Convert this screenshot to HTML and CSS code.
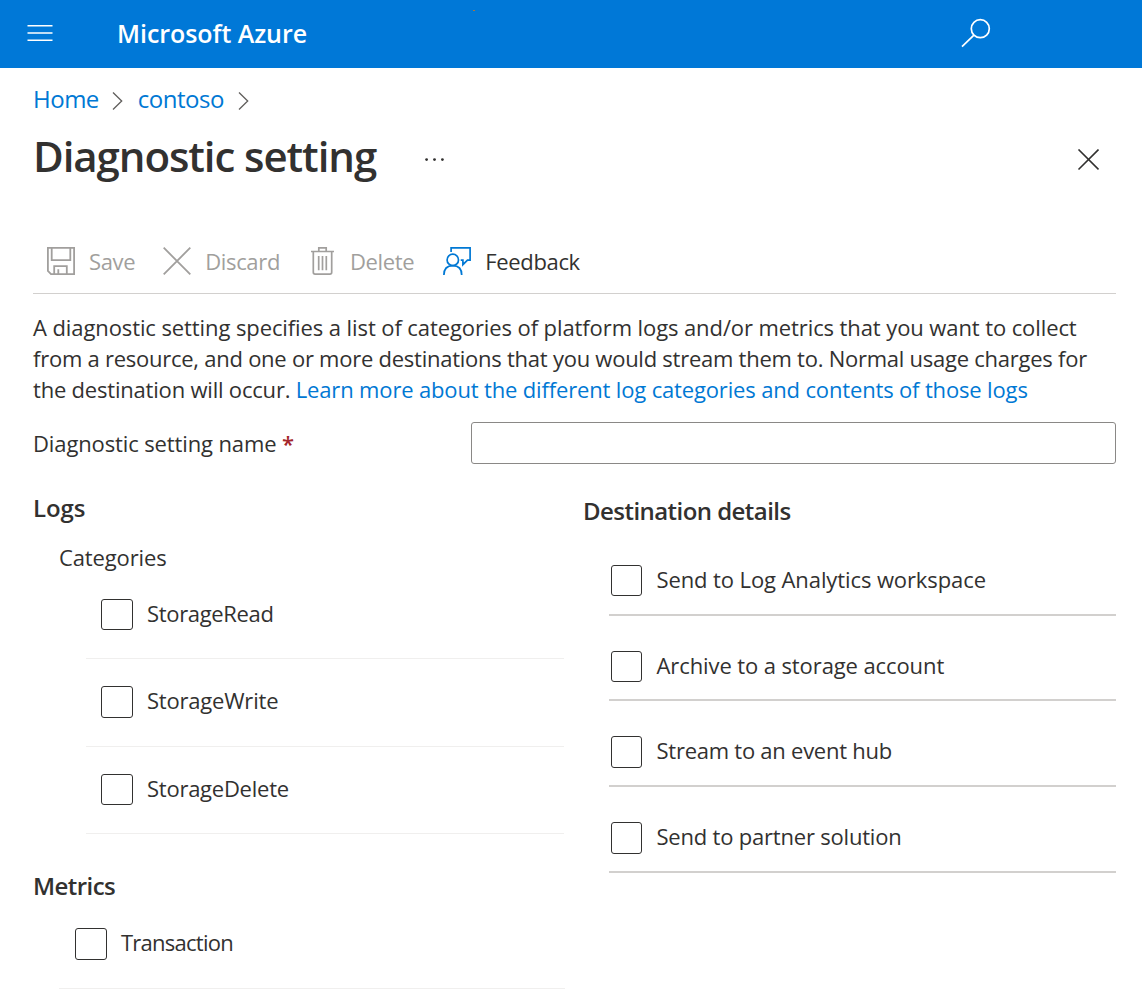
FILE: index.html
```html
<!DOCTYPE html>
<html lang="en">
<head>
<meta charset="utf-8">
<title>Diagnostic setting - Microsoft Azure</title>
<link rel="stylesheet" href="styles.css">
</head>
<body>
<header class="topbar">
  <svg class="menu-icon" width="26" height="18" viewBox="0 0 26 18" fill="none" stroke="#fff" stroke-width="1.5"><path d="M.5 1.8h25M.5 9h25M.5 16.2h25"/></svg>
  <span class="brand">Microsoft Azure</span>
  <span class="marker"></span>
  <svg class="search-icon" width="30" height="30" viewBox="0 0 30 30" fill="none" stroke="#fff" stroke-width="1.7"><circle cx="19.3" cy="10.7" r="9"/><path d="M12.9 17.1L1 28.6"/></svg>
</header>
<main class="page">
  <nav class="crumbs">
    <a class="home">Home</a>
    <svg width="12" height="20" viewBox="0 0 12 20" fill="none" stroke="#605e5c" stroke-width="1.3"><path d="M1 1.5L9.700 10 1 18.500"/></svg>
    <a class="resource">contoso</a>
    <svg width="12" height="20" viewBox="0 0 12 20" fill="none" stroke="#605e5c" stroke-width="1.3"><path d="M1 1.5L9.700 10 1 18.500"/></svg>
  </nav>
  <div class="title-row">
    <h1>Diagnostic setting</h1>
    <svg class="more" width="20" height="4" viewBox="0 0 20 4" fill="#323130"><circle cx="1.600" cy="1.600" r="1.400"/><circle cx="9.500" cy="1.600" r="1.400"/><circle cx="17.400" cy="1.600" r="1.400"/></svg>
    <svg class="close" width="22" height="22" viewBox="0 0 22 22" fill="none" stroke="#323130" stroke-width="1.600"><path d="M1.500.500l20 20M21.500.500l-20 20"/></svg>
  </div>
  <div class="toolbar">
    <button class="tool save" disabled>
      <svg width="28" height="28" viewBox="0 0 28 28" fill="none" stroke="#a19f9d" stroke-width="1.800"><path d="M.900.900h26.200v26.200H4L.900 24z"/><path d="M4.700.900v12.200h18.600V.900M7.200 27v-7.800h12.600V27M11.300 27v-4.800"/></svg>
      <span>Save</span>
    </button>
    <button class="tool discard" disabled>
      <svg width="28" height="28" viewBox="0 0 28 28" fill="none" stroke="#a19f9d" stroke-width="1.800"><path d="M.7.700l26.600 26.600M27.300.700L.700 27.300"/></svg>
      <span>Discard</span>
    </button>
    <button class="tool delete" disabled>
      <svg width="24" height="28" viewBox="0 0 24 28" fill="none" stroke="#a19f9d" stroke-width="1.700"><path d="M0 4.500h23M7.800 4.500V.900h7.400v3.600M2.300 4.500v20.800q0 1.800 1.800 1.800h14.800q1.800 0 1.800-1.800V4.500M7.700 9v14.200M11.500 9v14.200M15.300 9v14.200"/></svg>
      <span>Delete</span>
    </button>
    <button class="tool feedback">
      <svg width="28" height="28" viewBox="0 0 28 28" fill="none" stroke="#0078d4" stroke-width="1.700"><path d="M8.100 5V.900h19v12.300h-2.600l-4.600 4.500v-4.500h-2.200"/><circle cx="9.800" cy="12.900" r="5.700"/><path d="M.900 28q0-9.400 8.900-9.400t8.900 9.400"/></svg>
      <span>Feedback</span>
    </button>
  </div>
  <p class="intro">
    <span class="line l1">A diagnostic setting specifies a list of categories of platform logs and/or metrics that you want to collect</span>
    <span class="line l2">from a resource, and one or more destinations that you would stream them to. Normal usage charges for</span>
    <span class="line l3">the destination will occur. <a>Learn more about the different log categories and contents of those logs</a></span>
  </p>
  <div class="name-row">
    <label for="name">Diagnostic setting name <b>*</b></label>
    <input id="name" type="text">
  </div>
  <div class="columns">
    <section class="sources">
      <h2 class="logs">Logs</h2>
      <h3>Categories</h3>
      <ul class="categories">
        <li><i class="box"></i><span class="read">StorageRead</span></li>
        <li><i class="box"></i><span class="write">StorageWrite</span></li>
        <li><i class="box"></i><span class="del">StorageDelete</span></li>
      </ul>
      <h2 class="metrics">Metrics</h2>
      <ul class="metric-list">
        <li><i class="box"></i><span class="trans">Transaction</span></li>
      </ul>
    </section>
    <section class="destinations">
      <h2 class="dest">Destination details</h2>
      <ul>
        <li><i class="box"></i><span class="law">Send to Log Analytics workspace</span></li>
        <li><i class="box"></i><span class="arch">Archive to a storage account</span></li>
        <li><i class="box"></i><span class="hub">Stream to an event hub</span></li>
        <li><i class="box"></i><span class="partner">Send to partner solution</span></li>
      </ul>
    </section>
  </div>
</main>
</body>
</html>
```
FILE: styles.css
```css
* { box-sizing: border-box; }
body {
  margin: 0;
  background: #fff;
  color: #323130;
  font: 22px/31px "Segoe UI", "Open Sans", "Noto Sans", sans-serif;
  white-space: nowrap;
  height: 1002px;
  overflow: hidden;
}
h1, h2, h3, p, ul { margin: 0; padding: 0; }
ul { list-style: none; }
svg { display: block; flex: none; }
a { color: #0078d4; text-decoration: none; }

.topbar {
  position: relative;
  height: 68px;
  background: #0078d7;
  color: #fff;
  display: flex;
  align-items: center;
  padding: 0 151px 2px 27px;
}
.brand { margin-left: 64px; font-size: 25px; font-weight: 600; letter-spacing: -.06px; }
.marker { position: absolute; left: 473px; top: 10px; width: 2px; height: 1px; background: #a8763e; }
.search-icon { margin-left: auto; }

.page { padding: 0 26px 0 33px; }
.crumbs { display: flex; align-items: center; height: 62px; padding-bottom: 2px; font-size: 24px; letter-spacing: -.5px; }
.crumbs svg { margin: 5px 0 0 13px; }
.crumbs .resource { margin-left: 14px; }
.crumbs .resource + svg { margin-left: 14px; }

.title-row { display: flex; align-items: center; height: 60px; padding-right: 17px; }
h1 { font-size: 42px; line-height: 60px; font-weight: 600; letter-spacing: -1.080px; width: 344px; margin-top: -8px; }
.more { margin-left: 48px; }
.close { margin-left: auto; }

.toolbar {
  display: flex;
  height: 104px;
  padding: 57px 0 0 14px;
  border-bottom: 1px solid #d2d0ce;
}
.tool {
  display: flex;
  height: 28px;
  align-items: center;
  border: 0;
  padding: 0;
  background: none;
  font: inherit;
  letter-spacing: -.35px;
  color: #a19f9d;
}
.save span { margin-left: 14px; }
.discard { margin-left: 28px; }
.discard span { margin-left: 14px; }
.delete { margin-left: 31px; }
.delete span { margin-left: 15px; }
.feedback { margin-left: 29px; color: #323130; }
.feedback span { margin-left: 14px; }

.intro { margin-top: 18px; }
.line { display: block; }
.l1 { letter-spacing: -.095px; }
.l2 { letter-spacing: -.25px; }
.l3 { letter-spacing: -.2px; }
.l3 a { letter-spacing: -.155px; }

.name-row { display: flex; justify-content: space-between; align-items: center; height: 42px; margin-top: 17px; letter-spacing: -.12px; }
.name-row b { color: #a4262c; font-weight: 600; }
.name-row input { width: 645px; height: 42px; border: 1px solid #8a8886; border-radius: 3px; background: #fff; }

.columns { display: flex; justify-content: space-between; }
.sources { width: 532px; padding-top: 28px; }
h2 { font-size: 24px; line-height: 32px; font-weight: 600; letter-spacing: -.55px; }
.logs { letter-spacing: -.1px; }
h3 { font-size: 22px; font-weight: 400; letter-spacing: -.12px; margin: 18px 0 0 26px; }
.sources li { display: flex; align-items: center; border-bottom: 1px solid #f0efee; }
.categories { margin: 11px 0 0 53px; width: 478px; }
.categories li { height: 87.500px; padding-left: 15px; }
.categories li:first-child { height: 74px; padding-bottom: 13px; margin-top: 12px; }
li span { padding-bottom: 3px; }
.read { letter-spacing: -.33px; }
.write { letter-spacing: -.2px; }
.del { letter-spacing: -.25px; }
.trans { letter-spacing: -.75px; }
.law, .arch { letter-spacing: -.1px; }
.hub { letter-spacing: -.25px; }
.partner { letter-spacing: -.2px; }
.box { flex: none; width: 32px; height: 32px; margin-right: 14px; border: 1px solid #323130; border-radius: 3px; }
.categories li:first-child .box { height: 31px; margin-bottom: 2px; }
.categories li:last-child .box { height: 31px; margin-bottom: 1px; }
.metrics { margin-top: 36px; }
.metric-list { margin-left: 26px; }
.metric-list li { height: 87px; padding: 0 0 2px 16px; }

.destinations { width: 533px; padding-top: 31px; }
.destinations ul { margin: 3px 0 0 26px; }
.destinations li { display: flex; align-items: flex-end; height: 85.700px; padding: 0 0 17.600px 2px; border-bottom: 2px solid #d2d0ce; }
.destinations .box { width: 31px; height: 31px; margin-right: 14.500px; }
.destinations li:nth-child(n+3) .box { height: 32px; margin-bottom: -1px; }
.destinations li span { padding-bottom: 1px; }
```
